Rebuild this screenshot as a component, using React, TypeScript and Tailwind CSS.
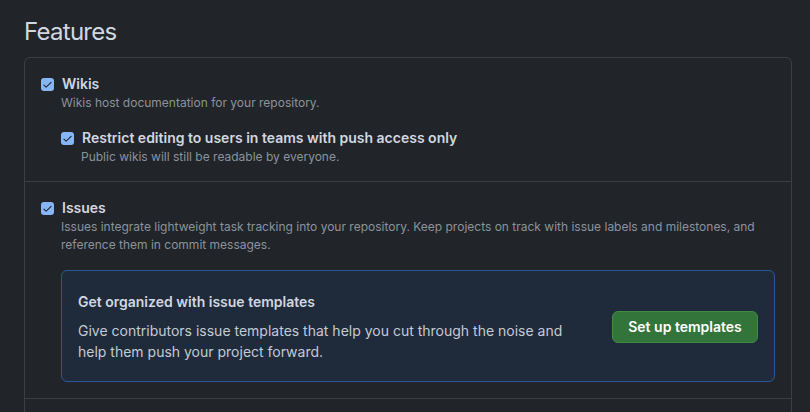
import React from 'react';

function Check() {
  return (
    <span className="flex h-[13px] w-[13px] shrink-0 items-center justify-center rounded-[3px] bg-[#86b6f6]">
      <svg viewBox="0 0 16 16" className="h-[11px] w-[11px]" fill="#1c2128">
        <path d="M13.78 4.22a.75.75 0 0 1 0 1.06l-7.25 7.25a.75.75 0 0 1-1.06 0L2.22 9.28a.75.75 0 1 1 1.06-1.06L6 10.94l6.72-6.72a.75.75 0 0 1 1.06 0Z" />
      </svg>
    </span>
  );
}

function Option({ label, children }: { label: string; children?: React.ReactNode }) {
  return (
    <div>
      <label className="flex h-5 items-center gap-2 text-[14px] font-semibold leading-5 text-[#d1d7e0]">
        <Check />
        {label}
      </label>
      <div className="pl-5">{children}</div>
    </div>
  );
}

export default function App() {
  return (
    <div
      className="min-h-screen bg-[#212429] pl-6 pr-[18px] pt-[17px]"
      style={{ fontFamily: 'Inter, "Noto Sans", sans-serif' }}
    >
      <h1 className="mb-[10px] text-[24px] font-normal leading-[30px] tracking-[-0.03em] text-[#d1d7e0]">
        Features
      </h1>

      <div className="rounded-md border border-[#3a3f47]">
        <section className="px-4 pb-[15px] pt-4">
          <Option label="Wikis">
            <p className="text-[12px] leading-[18px] text-[#8b939d]">
              Wikis host documentation for your repository.
            </p>
            <div className="mt-4">
              <Option label="Restrict editing to users in teams with push access only">
                <p className="text-[12px] leading-[18px] text-[#8b939d]">
                  Public wikis will still be readable by everyone.
                </p>
              </Option>
            </div>
          </Option>
        </section>

        <section className="border-t border-[#3a3f47] px-4 py-4">
          <Option label="Issues">
            <p className="text-[12px] leading-[18px] text-[#8b939d]">
              Issues integrate lightweight task tracking into your repository. Keep projects on track with issue
              labels and milestones, and reference them in commit messages.
            </p>
            <div className="mt-4 flex items-center justify-between rounded-md border border-[#2a5896] bg-[#1f2a3a] pb-[19px] pl-4 pr-4 pt-5">
              <div>
                <h3 className="text-[14px] font-semibold leading-[21px] text-[#d1d7e0]">
                  Get organized with issue templates
                </h3>
                <p className="mt-2 max-w-[490px] text-[14px] leading-[21px] text-[#c3cbd5]">
                  Give contributors issue templates that help you cut through the noise and help them push your
                  project forward.
                </p>
              </div>
              <button className="h-8 w-[146px] rounded-md border border-[#3f8a45] bg-[#33743a] text-[14px] font-semibold text-white">
                Set up templates
              </button>
            </div>
          </Option>
        </section>

        <section className="h-10 border-t border-[#3a3f47]" />
      </div>
    </div>
  );
}
